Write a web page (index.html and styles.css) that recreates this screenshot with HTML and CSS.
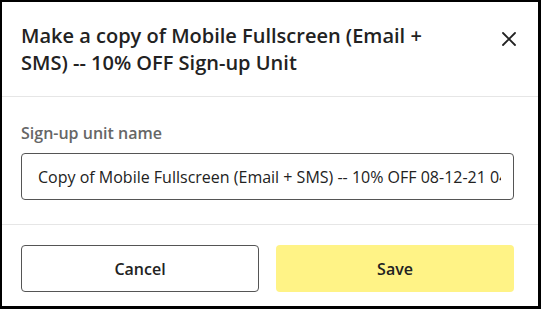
FILE: index.html
```html
<!DOCTYPE html>
<html lang="en">
<head>
    <meta charset="UTF-8">
    <meta name="viewport" content="width=device-width, initial-scale=1.0">
    <title>Make a copy</title>
    <link rel="stylesheet" href="styles.css">
</head>
<body>
    <div class="dialog">
        <div class="dialog-header">
            <h1>Make a copy of Mobile Fullscreen (Email + SMS) -- 10% OFF Sign-up Unit</h1>
            <button class="close-btn" aria-label="Close">
                <svg width="14" height="14" viewBox="0 0 14 14">
                    <path d="M1 1L13 13M13 1L1 13" stroke="#222" stroke-width="1.8" stroke-linecap="round"/>
                </svg>
            </button>
        </div>
        <div class="dialog-body">
            <label for="unitName">Sign-up unit name</label>
            <input type="text" id="unitName" value="Copy of Mobile Fullscreen (Email + SMS) -- 10% OFF 08-12-21 04:12 PM">
        </div>
        <div class="dialog-footer">
            <button class="btn btn-cancel">Cancel</button>
            <button class="btn btn-save">Save</button>
        </div>
    </div>
</body>
</html>
```

FILE: styles.css
```css
:root {
    --text-color: #222;
    --label-color: #666;
    --border-color: #555;
    --divider-color: #e6e6e6;
    --save-color: #fff386;
}

html, body {
    margin: 0;
    height: 309px;
    background: #000;
    font-family: 'Open Sans', 'Liberation Sans', sans-serif;
    color: var(--text-color);
    overflow: hidden;
}

.dialog {
    margin: 2px 3px 3px 2px;
    height: 304px;
    background: #fff;
    box-sizing: border-box;
}

.dialog-header {
    display: flex;
    justify-content: space-between;
    align-items: flex-start;
    padding: 20px 22px 20px 19px;
    border-bottom: 1px solid var(--divider-color);
}

h1 {
    margin: 0;
    font-size: 20px;
    line-height: 27px;
    font-weight: 600;
    max-width: 440px;
}

.close-btn {
    border: none;
    background: none;
    padding: 0;
    margin-top: 10px;
    width: 14px;
    height: 14px;
    cursor: pointer;
}

.close-btn svg {
    display: block;
}

.dialog-body {
    padding: 26px 24px 24px 19px;
    border-bottom: 1px solid var(--divider-color);
}

label {
    display: block;
    font-size: 16px;
    line-height: 21px;
    font-weight: 600;
    color: var(--label-color);
    margin-bottom: 9px;
}

input[type="text"] {
    display: block;
    width: 100%;
    height: 47px;
    box-sizing: border-box;
    padding: 0 12px 0 16px;
    border: 1px solid var(--border-color);
    border-radius: 4px;
    font-family: inherit;
    font-size: 16px;
    color: var(--text-color);
    outline: none;
}

.dialog-footer {
    display: grid;
    grid-template-columns: 1fr 1fr;
    gap: 17px;
    padding: 20px 24px 13px 19px;
}

.btn {
    height: 47px;
    border-radius: 4px;
    font-family: inherit;
    font-size: 16px;
    font-weight: 600;
    color: var(--text-color);
    cursor: pointer;
}

.btn-cancel {
    background: #fff;
    border: 1px solid var(--border-color);
}

.btn-save {
    background: var(--save-color);
    border: none;
}
```
